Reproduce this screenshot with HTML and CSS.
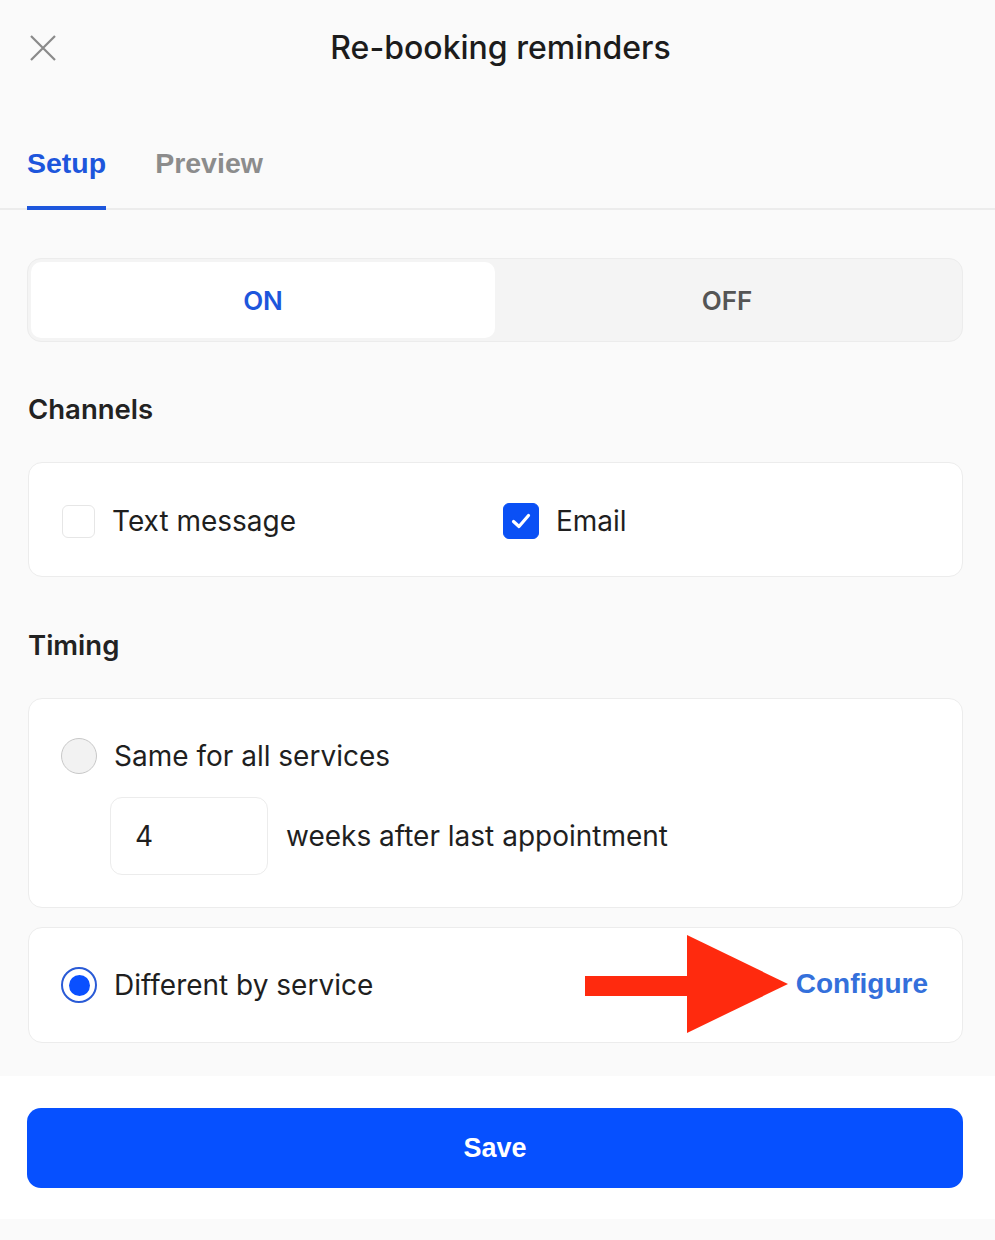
FILE: index.html
```html
<!DOCTYPE html>
<html lang="en">
  <head>
    <meta charset="utf-8">
    <title>Re-booking reminders</title>
    <link rel="stylesheet" href="styles.css">
  </head>
  <body>
	<header class="topbar">
		<button class="closeBtn" aria-label="Close">
			<svg width="26" height="26" viewBox="0 0 26 26"><path d="M1 1L25 25M25 1L1 25" stroke="#8a8a8a" stroke-width="2.2" fill="none"/></svg>
		</button>
		<h1 class="title">Re-booking reminders</h1>
	</header>

	<nav class="tabs">
		<a href="#" class="tab active">Setup</a>
		<a href="#" class="tab">Preview</a>
	</nav>

	<div class="content">
		<div class="segmented">
			<button class="seg on">ON</button>
			<button class="seg">OFF</button>
		</div>

		<h2 class="sectionTitle">Channels</h2>
		<div class="card channels">
			<label class="check">
				<span class="box"></span>
				<span>Text message</span>
			</label>
			<label class="check">
				<span class="box checked">
					<svg width="24" height="24" viewBox="0 0 24 24"><path d="M4.5 12.5L10 17.5L19.5 6.5" stroke="#fff" stroke-width="3.2" fill="none" stroke-linecap="round" stroke-linejoin="round"/></svg>
				</span>
				<span>Email</span>
			</label>
		</div>

		<h2 class="sectionTitle">Timing</h2>
		<div class="card timing">
			<label class="radioRow">
				<span class="radio"></span>
				<span>Same for all services</span>
			</label>
			<div class="weeksRow">
				<div class="numInput">4</div>
				<span>weeks after last appointment</span>
			</div>
		</div>

		<div class="card timing diff">
			<label class="radioRow">
				<span class="radio selected"></span>
				<span>Different by service</span>
			</label>
			<a href="#" class="configure">Configure</a>
			<!-- annotation arrow -->
			<svg class="arrow" width="204" height="100" viewBox="0 0 204 100"><rect x="0" y="41" width="106" height="20" fill="#ff2a0e"/><polygon points="102,0 203,49 102,98" fill="#ff2a0e"/></svg>
		</div>
	</div>

	<footer class="footer">
		<button class="saveBtn">Save</button>
	</footer>
  </body>
</html>
```

FILE: styles.css
```css
body{
	margin:0;
	background:#fafafa;
	font-family:Inter,"Noto Sans",sans-serif;
	color:#1f1f1f;
}
button{
	font-family:inherit;
}
.topbar{
	position:relative;
	height:96px;
	display:flex;
	align-items:center;
	justify-content:center;
}
.closeBtn{
	position:absolute;
	left:30px;
	top:35px;
	padding:0;
	border:0;
	background:none;
	width:26px;
	height:26px;
}
.title{
	margin:0 0 0 6px;
	font-size:32px;
	font-weight:500;
	line-height:36px;
	color:#1c1c1c;
}
.tabs{
	display:flex;
	gap:49px;
	padding-left:27px;
	border-bottom:2px solid #ececec;
}
.tab{
	font-family:"Liberation Sans",Arial,sans-serif;
	font-weight:bold;
	font-size:28.5px;
	line-height:34px;
	padding:50px 0 26px;
	color:#8c8c8c;
	text-decoration:none;
	border-bottom:4px solid transparent;
	margin-bottom:-2px;
}
.tab.active{
	color:#1d56dc;
	border-bottom-color:#1d56dc;
}
.content{
	padding:48px 32px 33px 27px;
}
.segmented{
	display:flex;
	padding:3px;
	height:76px;
	border:1px solid #ececec;
	border-radius:14px;
	background:#f4f4f4;
}
.seg{
	flex:1;
	border:0;
	background:none;
	border-radius:10px;
	font-size:26px;
	font-weight:600;
	color:#555;
}
.seg.on{
	background:#fff;
	color:#1d56dc;
}
.sectionTitle{
	margin:51px 0 37px 1px;
	font-size:27.5px;
	font-weight:600;
	line-height:32px;
	color:#222;
}
.card + .sectionTitle{
	margin-top:52px;
}
.card{
	position:relative;
	background:#fff;
	border:1px solid #ececec;
	border-radius:14px;
	margin-left:1px;
}
.channels{
	display:grid;
	grid-template-columns:441px 1fr;
	align-items:center;
	height:113px;
	padding:0 33px;
}
.check{
	display:flex;
	align-items:center;
	gap:17px;
	font-size:28px;
	padding-top:3px;
}
.box{
	width:33px;
	height:33px;
	border:1.5px solid #e6e6e6;
	border-radius:6px;
	box-sizing:border-box;
	display:flex;
	align-items:center;
	justify-content:center;
}
.box.checked{
	width:36px;
	height:36px;
	background:#0a50f5;
	border-color:#0a50f5;
}
.timing{
	padding:39px 33px 32px 32px;
}
.radioRow{
	display:flex;
	align-items:center;
	gap:17px;
	font-size:28px;
}
.radio{
	width:36px;
	height:36px;
	box-sizing:border-box;
	border-radius:50%;
	border:1.5px solid #c8c8c8;
	background:#f2f2f2;
}
.radio.selected{
	border:2.5px solid #2a5bd6;
	background:#fff;
	display:flex;
	align-items:center;
	justify-content:center;
}
.radio.selected::after{
	content:"";
	width:21px;
	height:21px;
	border-radius:50%;
	background:#0a50ff;
}
.weeksRow{
	display:flex;
	align-items:center;
	gap:18px;
	margin:23px 0 0 49px;
	font-size:28px;
}
.numInput{
	width:158px;
	height:78px;
	box-sizing:border-box;
	border:1.5px solid #ececec;
	border-radius:12px;
	padding-left:24px;
	display:flex;
	align-items:center;
}
.timing + .timing{
	margin-top:19px;
}
.diff{
	display:flex;
	align-items:center;
	justify-content:space-between;
	height:114px;
	padding:0 34px 0 32px;
}
.configure{
	font-family:"Liberation Sans",Arial,sans-serif;
	font-weight:bold;
	font-size:28px;
	color:#3470db;
	text-decoration:none;
	margin-top:-3px;
}
.arrow{
	position:absolute;
	left:556px;
	top:7px;
}
.footer{
	background:#fff;
	padding:32px 32px 31px 27px;
	margin-bottom:22px;
}
.saveBtn{
	display:block;
	width:100%;
	height:80px;
	border:0;
	border-radius:14px;
	background:#0650ff;
	color:#fff;
	font-family:"Liberation Sans",Arial,sans-serif;
	font-weight:bold;
	font-size:27px;
}
```
